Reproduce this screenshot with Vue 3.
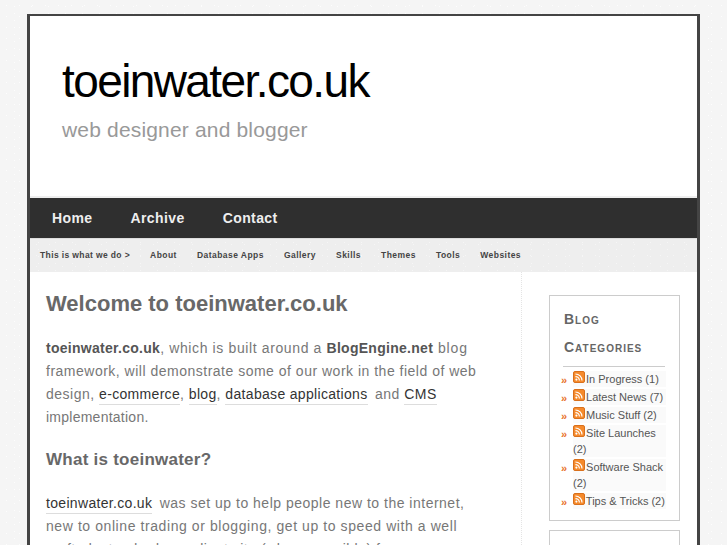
<script setup>
const subnav = ['About', 'Database Apps', 'Gallery', 'Skills', 'Themes', 'Tools', 'Websites']
const cats = [
  { name: 'In Progress', n: 1 },
  { name: 'Latest News', n: 7 },
  { name: 'Music Stuff', n: 2 },
  { name: 'Site Launches', n: 2 },
  { name: 'Software Shack', n: 2 },
  { name: 'Tips & Tricks', n: 2 }
]
</script>

<template>
  <div class="page">
    <div class="wrap">
      <header class="head">
        <h1>toeinwater.co.uk</h1>
        <p>web designer and blogger</p>
      </header>
      <nav class="nav">
        <a>Home</a><a>Archive</a><a>Contact</a>
      </nav>
      <nav class="sub">
        <a class="lead">This is what we do &gt;</a>
        <a v-for="s in subnav" :key="s">{{ s }}</a>
      </nav>
      <div class="body">
        <main class="main">
          <h2>Welcome to toeinwater.co.uk</h2>
          <p><b>toeinwater.co.uk</b><span class="wide">, which is built around a </span><b>BlogEngine.net</b><span class="wider"> blog</span> framework, will demonstrate some of our work in the field of web design, <a>e-commerce</a>, <a>blog</a>, <a class="gap">database applications</a> and <a class="cms">CMS</a> <span class="tight">implementation.</span></p>
          <h3>What is toeinwater?</h3>
          <p><a class="gap">toeinwater.co.uk</a> was set up to help people new to the internet, <span class="mid">new to online trading or blogging, get up to speed with a well</span> crafted, standard compliant site (where possible) for</p>
        </main>
        <aside class="side">
          <section class="box">
            <h4>Blog Categories</h4>
            <ul>
              <li v-for="c in cats" :key="c.name">
                <svg class="rss" viewBox="0 0 12 12" width="12" height="12">
                  <rect x="0.5" y="0.5" width="11" height="11" rx="1.5" fill="#f58a2c" stroke="#d9701c" />
                  <circle cx="3.4" cy="8.6" r="1.1" fill="#fff" />
                  <path d="M2.4 5.6a4 4 0 0 1 4 4M2.4 3a6.6 6.6 0 0 1 6.6 6.6" fill="none" stroke="#fff" stroke-width="1.2" />
                </svg>
                {{ c.name }} ({{ c.n }})
              </li>
            </ul>
          </section>
          <section class="box empty"></section>
        </aside>
      </div>
    </div>
  </div>
</template>

<style>
html, body { margin: 0; height: 100%; overflow: hidden; }
</style>

<style scoped>
.page {
  height: 545px;
  overflow: hidden;
  padding-top: 14px;
  box-sizing: border-box;
  background-color: #f5f5f5;
  background-image:
    radial-gradient(#fdfdfd 0.6px, transparent 0.8px),
    radial-gradient(#fdfdfd 0.6px, transparent 0.8px);
  background-size: 13px 11px, 17px 7px;
  background-position: 0 0, 6px 3px;
  font-family: "Liberation Sans", Arial, sans-serif;
}
.wrap {
  width: 667px;
  margin-left: 27px;
  border: 3px solid #444;
  border-top-width: 2px;
  border-bottom: 0;
  background: #fff;
}
.head { height: 182px; box-sizing: border-box; padding: 37px 0 0 32px; border-bottom: 2px solid #eee; }
.head h1 {
  margin: 0;
  font-size: 46px;
  font-weight: 400;
  line-height: 56px;
  letter-spacing: -1.6px;
  color: #000;
}
.head p { margin: 7px 0 0; font-size: 21px; line-height: 28px; color: #999; letter-spacing: 0.17px; }
.nav {
  height: 40px;
  background: #2f2f2f;
  display: flex;
  align-items: center;
  gap: 38px;
  padding-left: 22px;
  border-bottom: 1px solid #ddd;
}
.nav a { color: #eee; font-size: 14px; font-weight: 700; letter-spacing: 0.4px; }
.sub {
  height: 33px;
  background-color: #eee;
  background-image:
    radial-gradient(#f6f6f6 0.6px, transparent 0.8px),
    radial-gradient(#f6f6f6 0.6px, transparent 0.8px);
  background-size: 13px 11px, 17px 7px;
  display: flex;
  align-items: center;
  gap: 20px;
  padding: 0 0 2px 10px;
  box-sizing: border-box;
}
.sub a { color: #444; font-size: 8.5px; font-weight: 700; letter-spacing: 0.46px; }
.sub a.lead { letter-spacing: 0.38px; }
.body { display: flex; }
.main {
  width: 492px;
  box-sizing: border-box;
  padding: 19px 28px 0 16px;
  border-right: 1px dotted #e4e4e4;
  height: 273px;
  overflow: hidden;
}
.main h2 { margin: 0 0 20px; font-size: 22px; line-height: 26px; color: #686868; }
.main h3 { margin: 20px 0 21px; font-size: 17px; line-height: 22px; color: #686868; letter-spacing: 0.25px; }
.main p { margin: 0; font-size: 14px; line-height: 23px; color: #777; letter-spacing: 0.5px; }
.main p b { color: #555; letter-spacing: 0.28px; }
.main p .wide { letter-spacing: 0.62px; }
.main p .wider { letter-spacing: 0.9px; }
.main p .mid { letter-spacing: 0.58px; }
.main p .tight { letter-spacing: 0.25px; }
.main p a { color: #333; border-bottom: 1px solid #ddd; padding: 0 0 2px; letter-spacing: 0.32px; }
.main p a.gap { margin-right: 3px; }
.main p a.cms { letter-spacing: 0.5px; }
.side { padding: 23px 0 0 27px; }
.box {
  width: 102px;
  border: 1px solid #ccc;
  padding: 9px 14px 9px 13px;
  margin-bottom: 9px;
}
.box.empty { height: 40px; }
.box h4 {
  margin: 0;
  padding: 0 0 5px 1px;
  font-size: 14px;
  line-height: 28px;
  font-variant: small-caps;
  color: #666;
  letter-spacing: 1px;
  border-bottom: 1px solid #ccc;
}
.box ul { list-style: none; margin: 0; padding: 4px 0 0; }
.box li {
  position: relative;
  font-size: 11px;
  line-height: 16px;
  color: #555;
  margin: 0 -1px 2px 10px;
  background: #fafafa;
}
.box li::before {
  content: "»";
  position: absolute;
  left: -12px;
  top: 1px;
  color: #e8722a;
  font-weight: 700;
  font-size: 11px;
}
.rss { vertical-align: 0; margin-right: -2px; }
</style>
